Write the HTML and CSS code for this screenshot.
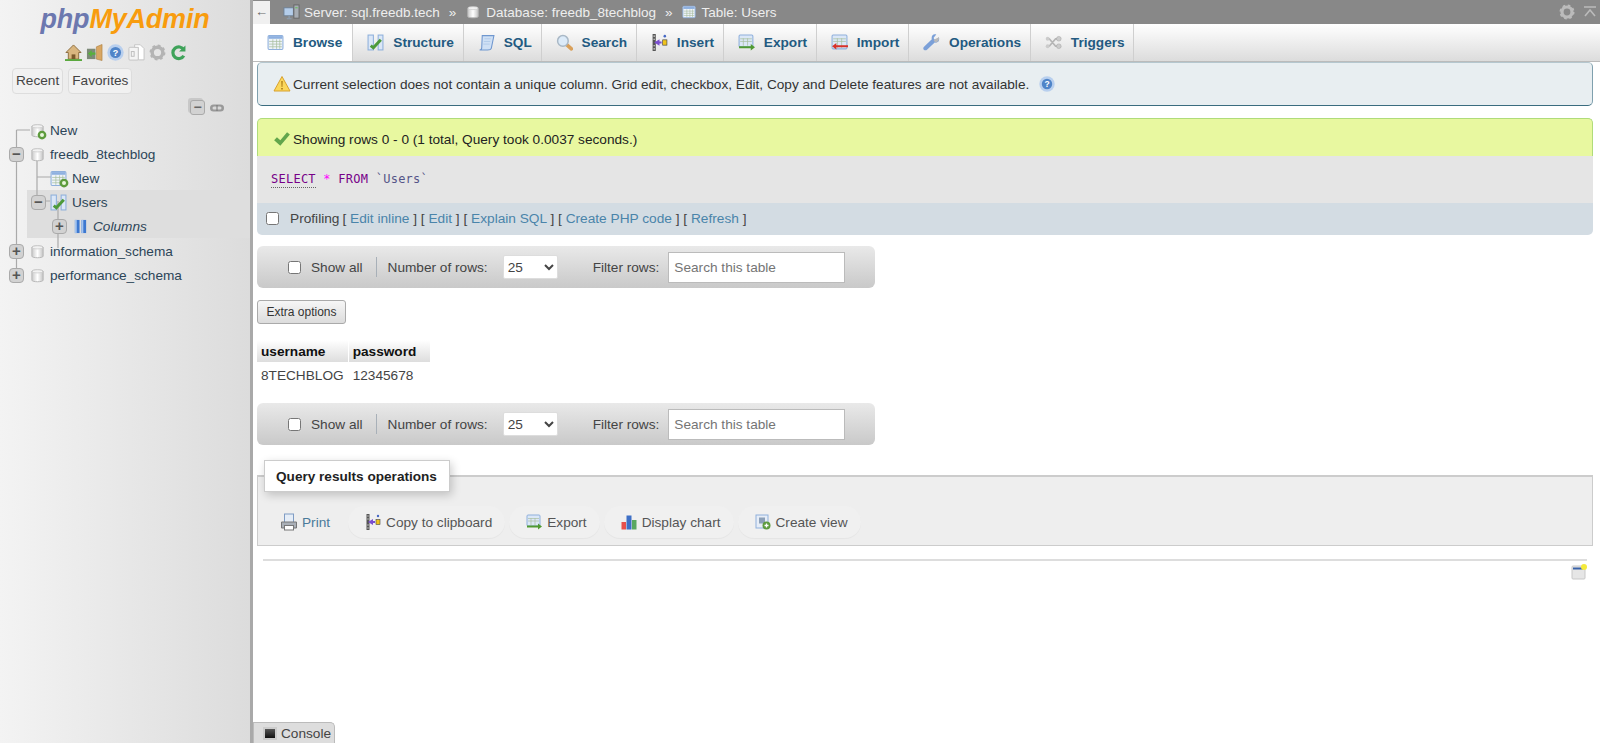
FILE: index.html
```html
<!DOCTYPE html>
<html lang="en">
<head>
<meta charset="utf-8">
<title>phpMyAdmin</title>
<link rel="stylesheet" href="styles.css">
</head>
<body>
<svg class="defs" width="0" height="0" aria-hidden="true">
  <defs>
    <linearGradient id="gdb" x1="0" x2="1" y1="0" y2="0"><stop offset="0" stop-color="#c9c9c9"/><stop offset=".5" stop-color="#fff"/><stop offset="1" stop-color="#c4c4c4"/></linearGradient>
    <symbol id="i-db" viewBox="0 0 16 16"><path d="M2 3.500C2 1.600 14 1.600 14 3.500V13C14 15.200 2 15.200 2 13Z" fill="url(#gdb)" stroke="#b5b5b5"/><ellipse cx="8" cy="3.600" rx="5.600" ry="1.700" fill="#f2f2f2" stroke="#bbb" stroke-width=".6"/></symbol>
    <symbol id="i-plus" viewBox="0 0 16 16"><circle cx="8" cy="8" r="7" fill="#5d9b3d"/><circle cx="8" cy="8" r="3.200" fill="#e8f5dc"/></symbol>
    <symbol id="i-table" viewBox="0 0 16 16"><rect x="1" y="1.500" width="14" height="13" rx="1" fill="#eef3fa" stroke="#8fb0dc"/><rect x="1.500" y="2" width="13" height="2.500" fill="#8eb0e0"/><path d="M2 7h12M2 9.500h12M2 12h12M5.500 5v9M9 5v9M12 5v9" stroke="#a9bf9f" stroke-width=".7"/></symbol>
    <symbol id="i-struct" viewBox="0 0 16 16"><rect x="1" y="1" width="5" height="14" fill="#dbe7f7" stroke="#8fb0dc"/><rect x="10.500" y="1" width="4.500" height="14" fill="#dbe7f7" stroke="#8fb0dc"/><path d="M3.500 11L6 13 13 5.500" fill="none" stroke="#4d9a3a" stroke-width="2.800"/></symbol>
    <symbol id="i-sql" viewBox="0 0 16 16"><path d="M4 1.500H15L12.500 13.500C12 15 10.500 15 9 15H1.500C3 15 3.500 14 3.500 13Z" fill="#cfe0f5" stroke="#6f97cf"/><path d="M6 4.500h6M5.500 7h6M5 9.500h6" stroke="#a9c3e6" stroke-width=".7"/></symbol>
    <symbol id="i-search" viewBox="0 0 16 16"><path d="M10 10l4.500 4" stroke="#d9a05a" stroke-width="3.400" stroke-linecap="round"/><circle cx="6.500" cy="6.500" r="5" fill="#dcebf9" stroke="#a9b8c6" stroke-width="1.400"/></symbol>
    <symbol id="i-insert" viewBox="0 0 16 16"><path d="M1.500 0h3v16h-3z" fill="#555"/><path d="M2.300 2h1.400M2.300 5h1.400M2.300 11h1.400M2.300 14h1.400" stroke="#ddd"/><path d="M3 8l5-3v2h2v2H8v2z" fill="#7a4fd0"/><rect x="11" y="5.500" width="4" height="5" fill="#f0c31c" stroke="#444" stroke-width=".6"/><circle cx="13" cy="2" r="1.200" fill="#4668c5"/></symbol>
    <symbol id="i-export" viewBox="0 0 16 16"><rect x="1" y="1" width="13" height="11" rx="1" fill="#dbe7f7" stroke="#8fb0dc"/><path d="M2 4.500h11M2 7h11M5 4v7M9 4v7" stroke="#a9bf9f" stroke-width=".7"/><path d="M1 11.500h11V9.500l4 3-4 3v-2H1z" fill="#4f9a32"/></symbol>
    <symbol id="i-import" viewBox="0 0 16 16"><rect x="1" y="1" width="14" height="13" rx="1" fill="#dbe7f7" stroke="#8fb0dc"/><path d="M2 4.500h12M2 7h12M6 4v9M10 4v9" stroke="#a9bf9f" stroke-width=".7"/><path d="M16 10.500H5V8.500l-4 3 4 3v-2h11z" fill="#d7312a"/></symbol>
    <symbol id="i-wrench" viewBox="0 0 16 16"><path d="M15 3l-3 2.500-1.500-.5-.5-1.500L12.500.5C9.500-.5 7.500 2 8.300 5L1 12c-1 1-1 2.500 0 3s2 .5 3-.5L11 8c3 .7 5-1.500 4-5z" fill="#7ba0d8"/><path d="M11 5l4-2c.5 2-.5 4-2.500 5L10 6.500z" fill="#b9b9b9"/></symbol>
    <symbol id="i-trig" viewBox="0 0 16 16"><path d="M2 4.500h2l6 7h3M2 11.500h2l6-7h3" fill="none" stroke="#b5b5b5" stroke-width="1.700"/><circle cx="13" cy="4.500" r="2.200" fill="#ccc" stroke="#a5a5a5" stroke-width=".5"/><circle cx="13" cy="11.500" r="2.200" fill="#ccc" stroke="#a5a5a5" stroke-width=".5"/><circle cx="2.500" cy="4.500" r="1.800" fill="#ccc"/><circle cx="2.500" cy="11.500" r="1.800" fill="#ccc"/></symbol>
    <symbol id="i-warn" viewBox="0 0 18 18"><path d="M9 1.500L17 16H1Z" fill="#fbd75b" stroke="#d8a12e" stroke-linejoin="round"/><path d="M8.300 6h1.400l-.3 6h-.8zM8.200 13h1.600v1.600H8.200z" fill="#a87814"/></symbol>
    <symbol id="i-help" viewBox="0 0 16 16"><circle cx="8" cy="8" r="7.700" fill="#b8cfee"/><circle cx="8" cy="8" r="5.200" fill="#4f84c8"/><text x="8" y="11" text-anchor="middle" font-family="Liberation Sans" font-weight="700" font-size="8.500" fill="#fff">?</text></symbol>
    <symbol id="i-check" viewBox="0 0 16 16"><path d="M1 9l2.500-2.500L6.500 9l6-7 2.500 2L6.500 14z" fill="#62a64c"/></symbol>
    <symbol id="i-gear" viewBox="0 0 16 16"><circle cx="8" cy="8" r="5" fill="none" stroke="currentColor" stroke-width="3.200"/><circle cx="8" cy="8" r="6.400" fill="none" stroke="currentColor" stroke-width="2.200" stroke-dasharray="2.500 2.530"/></symbol>
    <symbol id="i-print" viewBox="0 0 18 18"><rect x="4.500" y="1" width="9" height="9" fill="#e5edf7" stroke="#7f9cc4"/><path d="M1.500 9h15v6h-15z" fill="#aab0b8" stroke="#777"/><rect x="4.500" y="12.500" width="9" height="4.500" fill="#fff" stroke="#777"/></symbol>
    <symbol id="i-chart" viewBox="0 0 16 16"><rect x="0.500" y="8" width="4.500" height="7.500" fill="#e8504c"/><rect x="5.500" y="1.500" width="5" height="14" fill="#3d6fc6"/><rect x="11" y="6" width="4.500" height="9.500" fill="#5aa862"/></symbol>
    <symbol id="i-view" viewBox="0 0 16 16"><rect x="1" y="1" width="12" height="13" fill="#e6edf7" stroke="#8fb0dc"/><rect x="4" y="3.500" width="6" height="6" fill="#8ca0b8"/><circle cx="11.500" cy="11.500" r="4" fill="#5d9b3d"/><path d="M9.500 11.500h4M11.500 9.500v4" stroke="#fff" stroke-width="1.300"/></symbol>
    <symbol id="i-server" viewBox="0 0 18 18"><rect x="1" y="4" width="10" height="8.500" fill="#b4cdea" stroke="#6d7f92"/><path d="M4 15.500h5M6.500 12.500v3" stroke="#8b9aaa" stroke-width="1.500"/><rect x="11.500" y="1" width="5.500" height="14" fill="#a7adb4" stroke="#666"/><path d="M13 4h2.500" stroke="#5fbf4d"/></symbol>
    <symbol id="i-cols" viewBox="0 0 16 16"><rect x="2" y="1" width="5" height="14" fill="#3d78d0"/><rect x="9" y="1" width="5" height="14" fill="#3d78d0"/><rect x="2" y="1" width="2" height="14" fill="#a3c3ee"/><rect x="9" y="1" width="2" height="14" fill="#a3c3ee"/></symbol>
  </defs>
</svg>

<div class="app">
  <aside class="sidebar">
    <div class="logo"><span class="logo-php">php</span><span class="logo-my">MyAdmin</span></div>
    <div class="nav-icons">
      <svg class="ni" viewBox="0 0 18 18"><path d="M9 1L1 9h2.500v7h11V9H17Z" fill="#d9b67f" stroke="#8a6a3c"/><path d="M7 16v-5h4v5z" fill="#7a5a2c"/><path d="M0 17h18" stroke="#5aa83e" stroke-width="2"/></svg>
      <svg class="ni" viewBox="0 0 18 18"><path d="M1 5h9v11H1z" fill="#7d8a78"/><path d="M2 10l4-3.500V9h4v2.500H6V14z" fill="#58b03c"/><path d="M11 3l6-2.500v17L11 16z" fill="#d9a763" stroke="#a87a3a" stroke-width=".6"/></svg>
      <svg class="ni" viewBox="0 0 16 16"><use href="#i-help"/></svg>
      <svg class="ni" viewBox="0 0 18 18"><rect x="1" y="3.500" width="10" height="13.500" rx="1" fill="#f4f4f4" stroke="#c4c4c4"/><path d="M7 .8h6l4 4v12H11V3.500H7z" fill="#fff" stroke="#c4c4c4"/><rect x="3.500" y="8" width="3" height="5" fill="none" stroke="#bbb"/></svg>
      <svg class="ni gear-side" viewBox="0 0 16 16"><use href="#i-gear"/></svg>
      <svg class="ni" viewBox="0 0 16 16"><path d="M13 5.500A5.500 5.500 0 1 0 13 11" fill="none" stroke="#3fa35a" stroke-width="3"/><path d="M8.500 7h6V1.500z" fill="#3fa35a"/></svg>
    </div>
    <div class="side-tabs">
      <span class="side-tab">Recent</span>
      <span class="side-tab">Favorites</span>
    </div>
    <div class="tree-tools">
      <span class="collapse"><span class="minus-mark">−</span></span>
      <svg class="link" viewBox="0 0 16 10"><rect x="1" y="1.500" width="14" height="7" rx="3.500" fill="#999"/><rect x="3.500" y="3.500" width="9" height="3" rx="1.500" fill="#d8d8d8"/><path d="M8 2v6" stroke="#777"/></svg>
    </div>
    <div class="tree">
      <svg class="tree-lines" width="100" height="180" viewBox="0 0 100 180">
        <path d="M16.500 12V156M16.500 12H30M37 35V82M37 59H52M37 83H50M58 83V130" fill="none" stroke="#aaa" stroke-width="1.200"/>
      </svg>
      <div class="row">
        <span class="exp blank"></span>
        <svg class="ico"><use href="#i-db"/></svg>
        <svg class="badge"><use href="#i-plus"/></svg>
        <span class="lbl">New</span>
      </div>
      <div class="row">
        <span class="exp">−</span>
        <svg class="ico"><use href="#i-db"/></svg>
        <span class="lbl">freedb_8techblog</span>
      </div>
      <div class="row d1">
        <span class="exp blank"></span>
        <svg class="ico ico-l"><use href="#i-table"/></svg>
        <svg class="badge"><use href="#i-plus"/></svg>
        <span class="lbl">New</span>
      </div>
      <div class="sel-block">
        <div class="row d1">
          <span class="exp">−</span>
          <svg class="ico ico-l"><use href="#i-struct"/></svg>
          <span class="lbl">Users</span>
        </div>
        <div class="row d2">
          <span class="exp">+</span>
          <svg class="ico"><use href="#i-cols"/></svg>
          <span class="lbl it">Columns</span>
        </div>
      </div>
      <div class="row">
        <span class="exp">+</span>
        <svg class="ico"><use href="#i-db"/></svg>
        <span class="lbl">information_schema</span>
      </div>
      <div class="row">
        <span class="exp">+</span>
        <svg class="ico"><use href="#i-db"/></svg>
        <span class="lbl">performance_schema</span>
      </div>
    </div>
  </aside>

  <main class="main">
    <div class="crumbs">
      <span class="back">←</span>
      <svg class="ci"><use href="#i-server"/></svg><span>Server: sql.freedb.tech</span><span class="sep">»</span>
      <svg class="ci ci-s"><use href="#i-db"/></svg><span>Database: freedb_8techblog</span><span class="sep">»</span>
      <svg class="ci ci-s ci-t"><use href="#i-table"/></svg><span>Table: Users</span>
      <span class="crumb-right">
        <svg class="top-gear"><use href="#i-gear"/></svg>
        <svg class="top-up" viewBox="0 0 14 12"><path d="M1 1h12M2 10l5-6 5 6" fill="none" stroke="#bbb" stroke-width="1.600"/></svg>
      </span>
    </div>

    <nav class="tabs">
      <a class="tab active"><svg class="ti"><use href="#i-table"/></svg>Browse</a>
      <a class="tab"><svg class="ti"><use href="#i-struct"/></svg>Structure</a>
      <a class="tab"><svg class="ti"><use href="#i-sql"/></svg>SQL</a>
      <a class="tab"><svg class="ti"><use href="#i-search"/></svg>Search</a>
      <a class="tab"><svg class="ti"><use href="#i-insert"/></svg>Insert</a>
      <a class="tab"><svg class="ti"><use href="#i-export"/></svg>Export</a>
      <a class="tab"><svg class="ti"><use href="#i-import"/></svg>Import</a>
      <a class="tab"><svg class="ti"><use href="#i-wrench"/></svg>Operations</a>
      <a class="tab"><svg class="ti"><use href="#i-trig"/></svg>Triggers</a>
    </nav>

    <div class="content">
      <div class="notice">
        <svg class="msg-i"><use href="#i-warn"/></svg>
        <span>Current selection does not contain a unique column. Grid edit, checkbox, Edit, Copy and Delete features are not available.</span>
        <svg class="help"><use href="#i-help"/></svg>
      </div>

      <div class="result">
        <div class="success">
          <svg class="msg-i"><use href="#i-check"/></svg>
          <span>Showing rows 0 - 0 (1 total, Query took 0.0037 seconds.)</span>
        </div>
        <div class="sql"><span class="kw kw-u">SELECT</span> <span class="star">*</span> <span class="kw">FROM</span> <span class="tick">`Users`</span></div>
        <div class="profile">
          <input type="checkbox" class="cb">
          <span class="prof-lbl">Profiling</span>
          <span>[ <a>Edit inline</a> ] [ <a>Edit</a> ] [ <a>Explain SQL</a> ] [ <a>Create PHP code</a> ] [ <a>Refresh</a> ]</span>
        </div>
      </div>

      <div class="toolbar">
        <input type="checkbox" class="cb">
        <span class="show-all">Show all</span>
        <span class="divider"></span>
        <span class="num-lbl">Number of rows:</span>
        <select class="sel"><option>25</option></select>
        <span class="filter-lbl">Filter rows:</span>
        <input class="search" type="text" placeholder="Search this table">
      </div>

      <button class="extra">Extra options</button>

      <table class="data">
        <thead><tr><th>username</th><th>password</th></tr></thead>
        <tbody><tr><td>8TECHBLOG</td><td>12345678</td></tr></tbody>
      </table>

      <div class="toolbar">
        <input type="checkbox" class="cb">
        <span class="show-all">Show all</span>
        <span class="divider"></span>
        <span class="num-lbl">Number of rows:</span>
        <select class="sel"><option>25</option></select>
        <span class="filter-lbl">Filter rows:</span>
        <input class="search" type="text" placeholder="Search this table">
      </div>

      <section class="ops">
        <h2 class="legend">Query results operations</h2>
        <div class="ops-row">
          <a class="op op-first"><svg class="oi"><use href="#i-print"/></svg>Print</a>
          <a class="op"><svg class="oi"><use href="#i-insert"/></svg>Copy to clipboard</a>
          <a class="op"><svg class="oi"><use href="#i-export"/></svg>Export</a>
          <a class="op"><svg class="oi"><use href="#i-chart"/></svg>Display chart</a>
          <a class="op"><svg class="oi"><use href="#i-view"/></svg>Create view</a>
        </div>
      </section>

      <hr class="rule">
      <div class="note-row">
        <svg class="note" viewBox="0 0 16 16"><rect x="1" y="2" width="13" height="13" rx="1" fill="#e6e6e6" stroke="#c8c8c8"/><rect x="2" y="3.500" width="10" height="2" fill="#3a62a8"/><circle cx="13" cy="3" r="3" fill="#f4ea3c"/></svg>
      </div>
    </div>
    <div class="console"><span class="con-i"></span>Console</div>
  </main>
</div>
</body>
</html>
```
FILE: styles.css
```css
* { box-sizing: border-box; }
html, body { margin: 0; height: 100%; overflow: hidden; }
body { font-family: "Liberation Sans", Arial, sans-serif; font-size: 13.65px; color: #444; background: #fff; }
.defs { position: absolute; }
.app { display: flex; height: 743px; }

/* sidebar */
.sidebar { width: 253px; flex: none; border-right: 3px solid #a9a9a9; background: linear-gradient(to right, #f3f3f3, #dcdcdc); }
.logo { height: 40px; padding: 3px 0 0 0; text-align: center; font-size: 27px; line-height: 32px; font-weight: 700; font-style: italic; letter-spacing: -.2px; }
.logo-php { color: #6c78af; }
.logo-my { color: #f89c0e; }
.nav-icons { display: flex; height: 24px; padding-left: 65px; gap: 4px; margin-bottom: 4px; align-items: center; }
.ni { width: 17px; height: 17px; }
.gear-side { color: #b4b4b4; }
.side-tabs { display: flex; gap: 5px; padding-left: 12px; }
.side-tab { display: block; height: 26px; line-height: 24px; padding: 0 3px; border: 1px solid #ddd; border-radius: 4px; background: #f1f1f1; color: #444; }
.tree-tools { display: flex; justify-content: flex-end; align-items: center; gap: 4px; padding-right: 25px; height: 21px; margin-top: 3px; }
.collapse { width: 15px; height: 15px; border: 1px solid #aaa; border-radius: 3px; background: #d2d2d2; box-shadow: -2px -2px 0 0 #c8c8c8; font-weight: 700; line-height: 12px; text-align: center; font-size: 14px; color: #666; }
.minus-mark { display: block; }
.link { width: 16px; height: 10px; }
.tree { position: relative; }
.tree-lines { position: absolute; left: 0; top: 0; pointer-events: none; }
.row { position: relative; display: flex; align-items: center; height: 24px; padding-left: 9px; color: #2c4558; }
.row.d1 { padding-left: 31px; }
.row.d2 { padding-left: 52px; }
.sel-block { margin-left: 27px; width: 223px; background: #dedede; margin-bottom: 1px; }
.sel-block .row.d1 { padding-left: 4px; }
.sel-block .row.d2 { padding-left: 25px; }
.exp { flex: none; width: 15px; height: 15px; border: 1px solid #aaa; border-radius: 4px; background: #d2d2d2; color: #555; font-weight: 700; font-size: 15px; line-height: 12px; text-align: center; position: relative; }
.exp.blank { visibility: hidden; }
.ico { width: 15px; height: 15px; margin-left: 6px; flex: none; position: relative; }
.ico-l { width: 17px; height: 17px; margin-left: 4px; }
.badge { width: 10px; height: 10px; margin-left: -8px; margin-top: 10px; flex: none; position: relative; }
.lbl { margin-left: 5px; }
.ico + .badge + .lbl { margin-left: 3px; }
.it { font-style: italic; }

/* main */
.main { flex: 1; min-width: 0; position: relative; }
.crumbs { height: 24px; background: #888; color: #eee; display: flex; align-items: center; font-size: 13.5px; white-space: nowrap; }
.back { width: 17px; height: 23px; background: #f0f0f0; color: #666; text-align: center; line-height: 22px; margin-right: 13px; font-size: 13px; }
.ci { width: 17px; height: 17px; margin-right: 4px; }
.ci-s { width: 14px; height: 14px; margin-right: 6px; }
.ci-t { margin: 0 6px 0 -1px; }
.sep { margin: 0 10px 0 9px; color: #eee; }
.crumb-right { margin-left: auto; display: flex; align-items: center; gap: 8px; padding-right: 3px; }
.top-gear { width: 16px; height: 16px; color: #bbb; }
.top-up { width: 14px; height: 12px; }
.tabs { display: flex; height: 38px; background: linear-gradient(#fff, #dcdcdc); border-bottom: 1px solid #bbb; }
.tab { display: flex; align-items: center; padding: 0 8.8px 0 14px; border-right: 1px solid #cfcfcf; color: #235a81; font-weight: 700; white-space: nowrap; }
.tab.active { background: #fff; padding-right: 10px; }
.ti { width: 17px; height: 17px; margin-right: 9px; }
.content { padding: 0 7px 0 4px; }
.notice { display: flex; align-items: center; height: 44px; padding-left: 15px; background: #e8eef1; border: 1px solid #b5c7cf; border-bottom-color: #3a6c7f; border-right-color: #7fa0ae; border-left-color: #7fa0ae; border-radius: 5px; color: #333; }
.msg-i { width: 18px; height: 18px; margin-right: 2px; flex: none; }
.help { width: 16px; height: 16px; margin-left: 10px; }
.result { margin-top: 12px; }
.success { display: flex; align-items: center; height: 38px; padding: 3px 0 0 15px; background: #e8f8a0; border: 1px solid #b0dc7a; border-bottom: none; border-radius: 5px 5px 0 0; color: #222; }
.sql { height: 47px; line-height: 46px; padding-left: 14px; background: #e5e5e5; font-family: "DejaVu Sans Mono", monospace; font-size: 12px; letter-spacing: .25px; }
.kw { color: #708; }
.kw-u { border-bottom: 1px dotted #666; padding-bottom: 1px; }
.star { color: #f0f; }
.tick { color: #558; }
.profile { display: flex; align-items: center; height: 32px; padding: 0 0 2px 9px; background: #d3dce3; border-radius: 0 0 5px 5px; color: #444; font-size: 13.7px; }
.profile a { color: #4a84aa; }
.profile .cb { margin: 0 11px 0 0; }
.prof-lbl { margin-right: 3px; }
.cb { width: 13px; height: 13px; margin: 0; flex: none; }
.toolbar { display: flex; align-items: center; width: 618px; height: 42px; margin-top: 11px; padding-left: 31px; border-radius: 6px; background: linear-gradient(#e9e9e9, #c9c9c9); }
.show-all { margin-left: 10px; }
.divider { width: 1px; height: 20px; background: #a8b0b8; margin: 0 11px 0 13px; }
.sel { width: 55px; height: 24px; margin-left: 15px; border: 1px solid #ddd; border-radius: 2px; background: #fff; color: #444; font: 13.65px "Liberation Sans", sans-serif; }
.filter-lbl { margin-left: 35px; }
.search { width: 177px; height: 31px; margin-left: 9px; padding: 0 5px; border: 1px solid #bbb; background: #fff; font: 13.65px "Liberation Sans", sans-serif; }
.search::placeholder { color: #757575; opacity: 1; }
.extra { display: block; width: 89px; height: 24px; margin-top: 12px; padding: 0; border: 1px solid #aaa; border-radius: 3px; background: linear-gradient(#f6f6f6, #dcdcdc); color: #333; font: 12px "Liberation Sans", sans-serif; }
.data { margin-top: 16px; border-collapse: separate; border-spacing: 1px 0; margin-left: -1px; }
.data th { height: 22px; padding: 0 4px; text-align: left; color: #111; background: linear-gradient(#fff, #ddd); }
.data th:last-child { padding-right: 14px; }
.data td { height: 26px; padding: 0 4px; }
.data + .toolbar { margin-top: 15px; }
.ops { position: relative; height: 71px; margin-top: 30px; border: 1px solid #ccc; border-top-width: 2px; background: #eee; }
.legend { position: absolute; left: 6px; top: -17px; margin: 0; width: 186px; height: 32px; line-height: 32px; padding-left: 11px; border: 1px solid #ccc; background: #fff; color: #222; font-size: 13.6px; font-weight: 700; box-shadow: 2px 3px 10px rgba(0,0,0,.2); }
.ops-row { display: flex; gap: 4px; padding: 29px 0 0 22px; }
.op { display: flex; align-items: center; height: 32px; padding: 0 13px 0 17px; border-radius: 16px; background: #f0f0f0; box-shadow: 0 1px 1px rgba(0,0,0,.04); color: #555; white-space: nowrap; }
.op-first { background: none; box-shadow: none; padding: 0; margin-right: 14px; color: #4a7a9a; }
.oi { width: 16px; height: 16px; margin-right: 5px; }
.op-first .oi { width: 18px; height: 18px; margin-right: 4px; }
.rule { margin: 13px 6px 0 6px; border: 0; border-top: 2px solid #ddd; }
.note-row { display: flex; justify-content: flex-end; padding: 3px 0 0; }
.note { width: 16px; height: 16px; margin-right: 6px; }
.console { position: absolute; left: 0; bottom: 0; display: flex; align-items: center; width: 82px; height: 21px; padding-left: 9px; background: #ddd; border: 1px solid #bbb; border-bottom: 0; border-radius: 0 5px 0 0; color: #444; }
.con-i { width: 14px; height: 13px; margin-right: 4px; border: 2px solid #ccc; background: linear-gradient(#555, #111); }
```
